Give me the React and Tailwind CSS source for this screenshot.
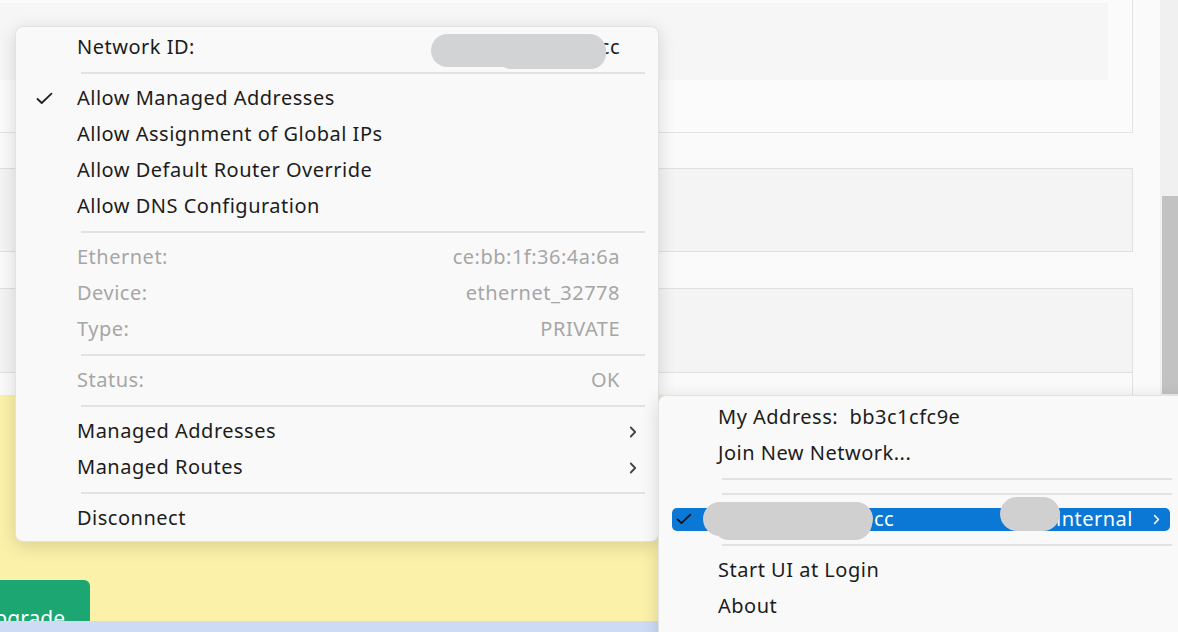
import React from 'react';

const Check = ({ className = '' }) => (
  <svg viewBox="0 0 18 14" className={className} fill="none">
    <path d="M1.5 7.5 L6 11.8 L16.5 1.8" stroke="currentColor" strokeWidth="2" strokeLinecap="round" strokeLinejoin="round" />
  </svg>
);

const Chevron = ({ className = '' }) => (
  <svg viewBox="0 0 8 12" className={className} fill="none">
    <path d="M1.8 1.5 L6.2 6 L1.8 10.5" stroke="currentColor" strokeWidth="1.8" strokeLinecap="round" strokeLinejoin="round" />
  </svg>
);

const Sep = ({ left = 'ml-[65px]', right = 'mr-[13px]' }) => (
  <div className={`h-[15px] flex items-center ${left} ${right}`}>
    <div className="h-[2px] w-full bg-[#e2e2e2]" />
  </div>
);

const Row = ({ children, checked, sub, value, muted }) => (
  <div className={`h-[36px] flex items-center pl-[61px] pr-[38px] relative ${muted ? 'text-[#a6a6a6]' : 'text-[#1c1c1c]'}`}>
    {checked && <Check className="absolute left-[20px] top-[12px] w-[17px] h-[13px] text-[#222]" />}
    <span className="flex-1 whitespace-nowrap">{children}</span>
    {value && <span className="whitespace-nowrap">{value}</span>}
    {sub && <Chevron className="absolute right-[21px] top-[13px] w-[8px] h-[12px] text-[#444]" />}
  </div>
);

const NetworkMenu = () => (
  <div className="absolute left-[15px] top-[26px] w-[644px] rounded-[8px] border border-[#e2e2e2] bg-[#f9f9f9] pt-[2px] pb-[5px] shadow-[0_4px_18px_rgba(0,0,0,0.14)]">
    <div className="h-[36px] flex items-center pl-[61px] pr-[38px] relative text-[#1c1c1c]">
      <span className="flex-1">Network ID:</span>
      <div className="absolute left-[415px] top-[5px] w-[175px] h-[33px] rounded-full bg-[#d2d3d5]" />
      <div className="absolute left-[480px] top-[9px] w-[110px] h-[31px] rounded-full bg-[#d2d3d5]" />
      <span>cc</span>
    </div>
    <Sep />
    <Row checked>Allow Managed Addresses</Row>
    <Row>Allow Assignment of Global IPs</Row>
    <Row>Allow Default Router Override</Row>
    <Row>Allow DNS Configuration</Row>
    <Sep />
    <Row muted value="ce:bb:1f:36:4a:6a">Ethernet:</Row>
    <Row muted value="ethernet_32778">Device:</Row>
    <Row muted value="PRIVATE">Type:</Row>
    <Sep />
    <Row muted value="OK">Status:</Row>
    <Sep />
    <Row sub>Managed Addresses</Row>
    <Row sub>Managed Routes</Row>
    <Sep />
    <Row>Disconnect</Row>
  </div>
);

const TrayMenu = () => (
  <div className="absolute left-[658px] top-[395px] w-[560px] h-[260px] rounded-tl-[8px] border border-[#e2e2e2] bg-[#f9f9f9] pt-[3px] shadow-[0_4px_18px_rgba(0,0,0,0.14)]">
    <div className="h-[36px] flex items-center pl-[59px] text-[#1c1c1c] whitespace-pre">My Address:  bb3c1cfc9e</div>
    <div className="h-[36px] flex items-center pl-[59px] text-[#1c1c1c]">Join New Network...</div>
    <div className="w-[520px]">
      <Sep left="ml-[63px]" right="mr-[7px]" />
      <Sep left="ml-[63px]" right="mr-[7px]" />
    </div>
    <div className="h-[36px] flex items-center">
      <div className="ml-[13px] w-[498px] h-[23px] rounded-[5px] bg-[#0a78d4] flex items-center relative text-white">
        <Check className="ml-[4px] w-[16px] h-[12px] text-[#111]" />
        <div className="absolute left-[31px] top-[-6px] w-[170px] h-[34px] rounded-full bg-[#d0d0d0]" />
        <div className="absolute left-[40px] top-[-2px] w-[160px] h-[34px] rounded-full bg-[#d0d0d0]" />
        <span className="absolute left-[202px] top-[-2px] leading-[26px]">cc</span>
        <span className="absolute right-[37px] top-[-2px] leading-[26px]">.internal</span>
        <div className="absolute left-[328px] top-[-11px] w-[60px] h-[34px] rounded-full bg-[#d0d0d0]" />
        <Chevron className="absolute right-[10px] top-[6px] w-[7px] h-[11px] text-white" />
      </div>
    </div>
    <div className="w-[520px]">
      <Sep left="ml-[63px]" right="mr-[7px]" />
    </div>
    <div className="h-[36px] flex items-center pl-[59px] text-[#1c1c1c]">Start UI at Login</div>
    <div className="h-[36px] flex items-center pl-[59px] text-[#1c1c1c]">About</div>
  </div>
);

export default function App() {
  return (
    <div className="relative w-[1178px] h-[632px] overflow-hidden bg-[#fafafa] font-['Noto_Sans',sans-serif] text-[20px] tracking-[0.5px]">
      <div className="flex h-full">
        <div className="w-[1160px] flex flex-col">
          <div className="h-[133px] w-[1133px] border-b border-r border-[#e3e3e3] bg-[#fbfbfb] pt-[3px]">
            <div className="h-[77px] mr-[24px] bg-[#f6f6f6]" />
          </div>
          <div className="h-[35px]" />
          <div className="h-[84px] w-[1133px] border-y border-r border-[#e0e0e0] bg-[#f4f4f4]" />
          <div className="h-[36px]" />
          <div className="h-[85px] w-[1133px] border-y border-r border-[#e0e0e0] bg-[#f4f4f4]" />
          <div className="h-[22px] w-[1133px] border-r border-[#e3e3e3]" />
          <div className="h-[226px] bg-[#fbf1a9] flex items-end">
            <div className="w-[90px] h-[41px] rounded-tr-[6px] bg-[#1ba672] overflow-hidden flex justify-end pr-[25px] pt-[24px]">
              <span className="text-white text-[21px] leading-[28px] tracking-normal whitespace-nowrap">Upgrade</span>
            </div>
          </div>
          <div className="h-[11px] bg-[#cddcf4]" />
        </div>
        <div className="w-[18px] bg-[#f0f0f0] pt-[196px] pl-[2px]">
          <div className="h-[198px] bg-[#c2c2c2]" />
        </div>
      </div>
      <NetworkMenu />
      <TrayMenu />
    </div>
  );
}
